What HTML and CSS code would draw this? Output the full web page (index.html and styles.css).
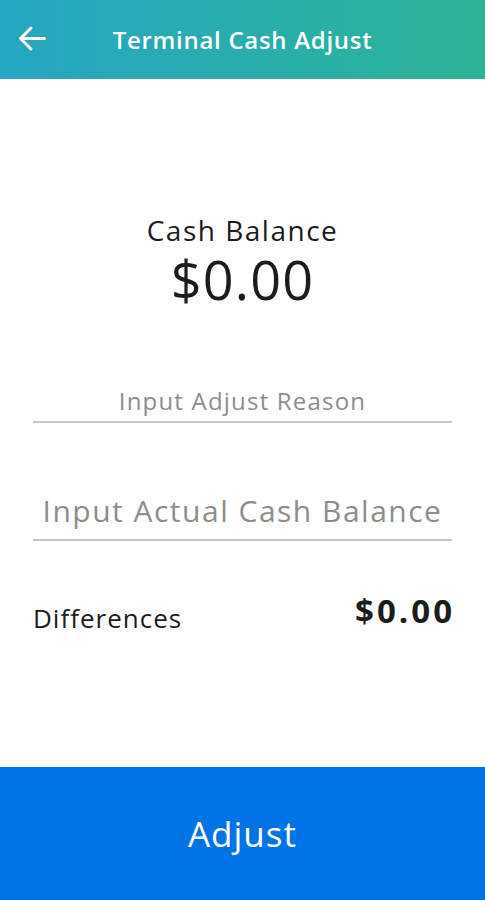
FILE: index.html
```html
<html>
    <head>
        <meta name="viewport" content="width=device-width, initial-scale=1">
        <title>Terminal Cash Adjust</title>
        <link rel="stylesheet" href="styles.css">
    </head>
    <body>
        <div class="screen">
            <div class="top-bar">
                <button type="button" class="back-button">
                    <svg width="28" height="25" viewBox="0 0 28 25">
                        <path d="M26.5 12.5 H3 M13 2 L2.5 12.5 L13 23" fill="none" stroke="#fff" stroke-width="3" stroke-linecap="round" stroke-linejoin="round"/>
                    </svg>
                </button>
                <h1>Terminal Cash Adjust</h1>
            </div>
            <div class="content">
                <div class="balance-box">
                    <div class="balance-label">Cash Balance</div>
                    <div class="balance-value">$0.00</div>
                </div>
                <div class="field field-reason">
                    <input type="text" placeholder="Input Adjust Reason">
                </div>
                <div class="field field-actual">
                    <input type="text" placeholder="Input Actual Cash Balance">
                </div>
                <div class="diff-row">
                    <span class="diff-label">Differences</span>
                    <span class="diff-value">$0.00</span>
                </div>
            </div>
            <button type="button" class="adjust-button">Adjust</button>
        </div>
    </body>
</html>
```

FILE: styles.css
```css
body {
    margin: 0;
    font-family: "Open Sans", "Noto Sans", sans-serif;
    color: #1c1c1c;
    background: #fff;
}
.screen {
    display: flex;
    flex-direction: column;
    height: 900px;
}
.top-bar {
    height: 79px;
    background: linear-gradient(90deg, #25a6c3, #2db496);
    display: flex;
    align-items: center;
    position: relative;
}
.back-button {
    background: none;
    border: none;
    padding: 0 0 0 18px;
    display: flex;
    align-items: center;
    cursor: pointer;
    position: absolute;
    left: 0;
    top: 26px;
}
.top-bar h1 {
    margin: 0;
    width: 100%;
    text-align: center;
    color: #fff;
    font-size: 24px;
    font-weight: 600;
    letter-spacing: 0.7px;
}
.content {
    flex: 1;
    padding: 0 33px;
}
.balance-box {
    text-align: center;
    margin-top: 134px;
}
.balance-label {
    font-size: 28px;
    line-height: 34px;
    letter-spacing: 1.5px;
}
.balance-value {
    font-size: 54px;
    line-height: 64px;
    font-weight: 500;
    letter-spacing: 1.2px;
}
.field {
    border-bottom: 2px solid #c6c6c6;
}
.field input {
    display: block;
    width: 100%;
    border: none;
    outline: none;
    background: none;
    text-align: center;
    font-family: inherit;
    color: #333;
    padding: 0;
}
.field input::placeholder {
    color: #8d8d8d;
}
.field-reason {
    margin-top: 68px;
}
.field-reason input {
    font-size: 24px;
    height: 42px;
    letter-spacing: 1.2px;
}
.field-actual {
    margin-top: 58px;
}
.field-actual input {
    font-size: 30px;
    height: 58px;
    letter-spacing: 1.5px;
}
.diff-row {
    display: flex;
    justify-content: space-between;
    align-items: flex-start;
    margin-top: 50px;
}
.diff-label {
    font-size: 26px;
    line-height: 34px;
    margin-top: 10px;
    letter-spacing: 1px;
}
.diff-value {
    font-size: 33px;
    line-height: 40px;
    font-weight: 700;
    letter-spacing: 3px;
    margin-right: -3px;
}
.adjust-button {
    height: 133px;
    border: none;
    background: #0073e6;
    color: #fff;
    font-family: inherit;
    font-size: 35px;
    letter-spacing: 1px;
    cursor: pointer;
}
```
